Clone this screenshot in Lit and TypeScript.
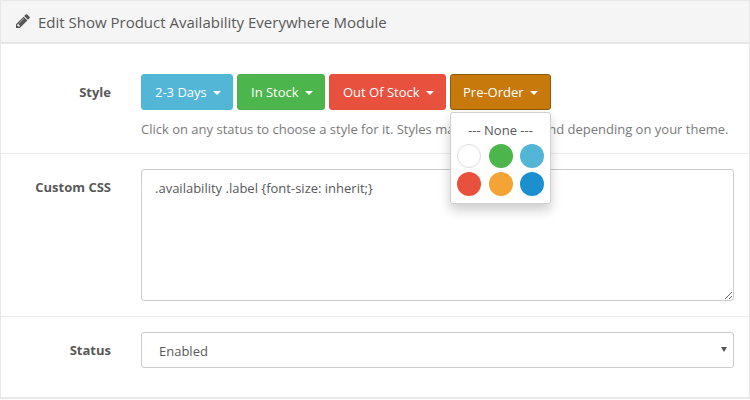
import { LitElement, html, css } from "lit";
import { customElement } from "lit/decorators.js";

@customElement("app-root")
export class AppRoot extends LitElement {
  static styles = css`
    :host { display: block; width: 750px; height: 400px; background: #fff; overflow: hidden; font-family: "Open Sans", sans-serif; font-size: 13px; color: #595959; }
    * { box-sizing: border-box; }
    .panel { height: 399px; border: 1px solid #e8e8e8; border-width: 1px 1px 2px 1px; background: #fff; }
    .head { height: 43px; background: #f5f5f5; border-bottom: 2px solid #e6e6e6; display: flex; align-items: center; gap: 8px; padding-left: 15px; font-size: 15px; color: #595959; line-height: 20px; }
    .head svg { width: 14px; height: 14px; flex: none; margin-top: -1px; }
    .row { display: grid; grid-template-columns: 110px 593px; column-gap: 30px; border-bottom: 1px solid #ececec; padding: 15px 0; }
    .row.first { padding-top: 30px; height: 110px; }
    .row.area { height: 163px; }
    .row.last { border-bottom: 0; }
    label { text-align: right; font-weight: 700; line-height: 36px; }
    .btns { display: flex; gap: 4px; position: relative; }
    .btn { height: 36px; border: 1px solid; border-radius: 3px; padding: 0 13px; color: #fff; display: flex; align-items: center; gap: 6px; font-size: 13px; white-space: nowrap; }
    .caret { width: 0; height: 0; border-left: 4px solid transparent; border-right: 4px solid transparent; border-top: 4px solid #fff; margin-top: 2px; }
    .info { background: #53b6d6; border-color: #46b8da; width: 92px; }
    .ok { background: #4cb54c; border-color: #4cae4c; width: 88px; }
    .bad { background: #e8513e; border-color: #e74c3c; width: 117px; }
    .pre { background: #c7790b; border-color: #8a5a10; padding-left: 12px; width: 101px; }
    .help { margin: 10px 0 0; line-height: 18px; color: #7a7a7a; font-size: 13px; white-space: nowrap; }
    .menu { position: absolute; left: 309px; top: 38px; width: 101px; height: 92px; background: #fff; border: 1px solid #d0d0d0; border-radius: 3px; box-shadow: 0 6px 12px rgba(0,0,0,.2); padding: 8px 6px 0; }
    .none { text-align: center; line-height: 18px; font-size: 13px; color: #595959; }
    .dots { display: grid; grid-template-columns: repeat(3, 24px); justify-content: space-between; row-gap: 4px; margin-top: 5px; }
    .dot { width: 24px; height: 24px; border-radius: 50%; }
    textarea, select { font: inherit; font-family: "Open Sans", sans-serif; color: #595959; background: #fff; border: 1px solid #ccc; border-radius: 3px; width: 593px; display: block; outline: none; }
    textarea { height: 132px; padding: 9px 13px; line-height: 18px; resize: both; }
    .sel { position: relative; width: 593px; }
    select { height: 36px; padding: 2px 13px 0 17px; appearance: none; -webkit-appearance: none; }
    .arrow { position: absolute; right: 7px; top: 15px; width: 0; height: 0; border-left: 3px solid transparent; border-right: 3px solid transparent; border-top: 5px solid #555; }
  `;

  render() {
    const colors = ["#fff", "#4cb54c", "#53b6d6", "#e8513e", "#f4a435", "#1c90cf"];
    return html`
      <div class="panel">
        <div class="head">
          <svg viewBox="0 0 1536 1536" fill="#555"><path d="M363 1408l91-91-235-235-91 91v107h128v128h107zm523-928q0-22-22-22-10 0-17 7L305 1007q-7 7-7 17 0 22 22 22 10 0 17-7l542-542q7-7 7-17zm-54-192l416 416-832 832H0v-416zm683 96q0 53-37 90l-166 166-416-416 166-165q36-38 90-38 53 0 91 38l235 234q37 39 37 91z"/></svg>
          <span>Edit Show Product Availability Everywhere Module</span>
        </div>
        <div class="row first">
          <label>Style</label>
          <div>
            <div class="btns">
              <div class="btn info">2-3 Days <span class="caret"></span></div>
              <div class="btn ok">In Stock <span class="caret"></span></div>
              <div class="btn bad">Out Of Stock <span class="caret"></span></div>
              <div class="btn pre">Pre-Order <span class="caret"></span></div>
              <div class="menu">
                <div class="none">--- None ---</div>
                <div class="dots">
                  ${colors.map((c, i) => html`<div class="dot" style="background:${c};${i === 0 ? "border:1px solid #ddd" : ""}"></div>`)}
                </div>
              </div>
            </div>
            <p class="help">Click on any status to choose a style for it. Styles may look distinct and depending on your theme.</p>
          </div>
        </div>
        <div class="row area">
          <label>Custom CSS</label>
          <textarea>.availability .label {font-size: inherit;}</textarea>
        </div>
        <div class="row last">
          <label>Status</label>
          <div class="sel">
            <select><option>Enabled</option></select>
            <span class="arrow"></span>
          </div>
        </div>
      </div>
    `;
  }
}
